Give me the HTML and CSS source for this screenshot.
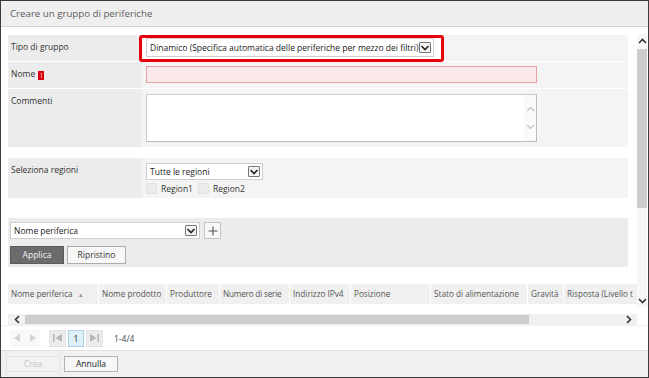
FILE: index.html
```html
<!DOCTYPE html>
<html lang="it">

<head>
    <meta charset="UTF-8">
    <title>Creare un gruppo di periferiche</title>
    <link rel="stylesheet" href="styles.css">
</head>

<body>
    <div class="dialog">
        <div class="dialog-title">Creare un gruppo di periferiche</div>

        <div class="scroll-area">
            <div class="content">
                <div class="form-table">
                    <div class="form-row row-type">
                        <div class="form-label">Tipo di gruppo</div>
                        <div class="form-value">
                            <div class="highlight">
                                <div class="select select-type">
                                    <span>Dinamico (Specifica automatica delle periferiche per mezzo dei filtri)</span>
                                    <span class="select-arrow"><svg width="10" height="8" viewBox="0 0 10 8"><polyline points="1.5,2 5,5.5 8.5,2" fill="none" stroke="#222" stroke-width="1.6"/></svg></span>
                                </div>
                            </div>
                        </div>
                    </div>
                    <div class="form-row row-name">
                        <div class="form-label">Nome <span class="required">!</span></div>
                        <div class="form-value">
                            <div class="input input-error"></div>
                        </div>
                    </div>
                    <div class="form-row row-comment">
                        <div class="form-label">Commenti</div>
                        <div class="form-value">
                            <div class="textarea">
                                <div class="textarea-bar">
                                    <svg width="9" height="6" viewBox="0 0 9 6"><polyline points="1,5 4.5,1.5 8,5" fill="none" stroke="#c4c4c4" stroke-width="1.2"/></svg>
                                    <svg width="9" height="6" viewBox="0 0 9 6"><polyline points="1,1 4.5,4.5 8,1" fill="none" stroke="#c4c4c4" stroke-width="1.2"/></svg>
                                </div>
                            </div>
                        </div>
                    </div>
                </div>

                <div class="form-table regions">
                    <div class="form-row row-regions">
                        <div class="form-label">Seleziona regioni</div>
                        <div class="form-value">
                            <div class="select select-regions">
                                <span>Tutte le regioni</span>
                                <span class="select-arrow"><svg width="10" height="8" viewBox="0 0 10 8"><polyline points="1.5,2 5,5.5 8.5,2" fill="none" stroke="#222" stroke-width="1.6"/></svg></span>
                            </div>
                            <div class="checks">
                                <span class="checkbox"></span><span class="check-label">Region1</span>
                                <span class="checkbox"></span><span class="check-label">Region2</span>
                            </div>
                        </div>
                    </div>
                </div>

                <div class="filter-box">
                    <div class="filter-line">
                        <div class="select select-filter">
                            <span>Nome periferica</span>
                            <span class="select-arrow"><svg width="10" height="8" viewBox="0 0 10 8"><polyline points="1.5,2 5,5.5 8.5,2" fill="none" stroke="#222" stroke-width="1.6"/></svg></span>
                        </div>
                        <div class="btn-add"><svg width="10" height="10" viewBox="0 0 10 10"><path d="M5 0.5V9.5M0.5 5H9.5" stroke="#555" stroke-width="1.1"/></svg></div>
                    </div>
                    <div class="filter-buttons">
                        <div class="btn btn-dark">Applica</div>
                        <div class="btn btn-light">Ripristino</div>
                    </div>
                </div>

                <div class="grid-header">
                    <div class="col col-1">Nome periferica <span class="sort">&#9650;</span></div>
                    <div class="col col-2">Nome prodotto</div>
                    <div class="col col-3">Produttore</div>
                    <div class="col col-4">Numero di serie</div>
                    <div class="col col-5">Indirizzo IPv4</div>
                    <div class="col col-6">Posizione</div>
                    <div class="col col-7">Stato di alimentazione</div>
                    <div class="col col-8">Gravità</div>
                    <div class="col col-9">Risposta (Livello t</div>
                </div>
            </div>

            <div class="vscroll">
                <div class="vscroll-arrow"><svg width="9" height="6" viewBox="0 0 9 6"><polyline points="1,5 4.5,1.5 8,5" fill="none" stroke="#333" stroke-width="1.6"/></svg></div>
                <div class="vscroll-thumb"></div>
                <div class="vscroll-space"></div>
                <div class="vscroll-arrow"><svg width="9" height="6" viewBox="0 0 9 6"><polyline points="1,1 4.5,4.5 8,1" fill="none" stroke="#333" stroke-width="1.6"/></svg></div>
            </div>
        </div>

        <div class="hscroll">
            <div class="hscroll-track">
                <div class="hscroll-arrow"><svg width="6" height="9" viewBox="0 0 6 9"><polyline points="5,1 1.5,4.5 5,8" fill="none" stroke="#333" stroke-width="1.6"/></svg></div>
                <div class="hscroll-thumb"></div>
                <div class="hscroll-space"></div>
                <div class="hscroll-arrow"><svg width="6" height="9" viewBox="0 0 6 9"><polyline points="1,1 4.5,4.5 1,8" fill="none" stroke="#333" stroke-width="1.6"/></svg></div>
            </div>
        </div>

        <div class="pager">
            <div class="pager-btn pager-plain"><svg width="7" height="8" viewBox="0 0 7 8"><polygon points="6,0 6,8 0,4" fill="#d2d2d2"/></svg></div>
            <div class="pager-btn pager-plain"><svg width="7" height="8" viewBox="0 0 7 8"><polygon points="1,0 1,8 7,4" fill="#d2d2d2"/></svg></div>
            <div class="pager-btn pager-box first-box"><svg width="9" height="8" viewBox="0 0 9 8"><rect x="0" y="0" width="1.5" height="8" fill="#b8b8b8"/><polygon points="9,0 9,8 2.5,4" fill="#b8b8b8"/></svg></div>
            <div class="pager-btn pager-current">1</div>
            <div class="pager-btn pager-box"><svg width="9" height="8" viewBox="0 0 9 8"><polygon points="0,0 0,8 6.5,4" fill="#b8b8b8"/><rect x="7.5" y="0" width="1.5" height="8" fill="#b8b8b8"/></svg></div>
            <div class="pager-info">1-4/4</div>
        </div>

        <div class="dialog-footer">
            <div class="btn btn-footer btn-disabled">Crea</div>
            <div class="btn btn-footer">Annulla</div>
        </div>
    </div>
</body>

</html>
```

FILE: styles.css
```css
body {
    margin: 0;
    padding: 0;
    font-family: "Open Sans", "Noto Sans", sans-serif;
    font-size: 8.5px;
    color: #333;
}

.dialog {
    width: 649px;
    height: 378px;
    box-sizing: border-box;
    border: 1px solid #3c3c3c;
    display: flex;
    flex-direction: column;
    background-color: #fff;
    overflow: hidden;
}

.dialog-title {
    height: 25px;
    line-height: 25px;
    padding-left: 9px;
    background-color: #efefef;
    border-bottom: 1px solid #d4d4d4;
    font-size: 9.7px;
    color: #606060;
}

/* scrolling part */

.scroll-area {
    height: 287px;
    display: flex;
}

.content {
    width: 629px;
    padding: 8px 0 0 7px;
    overflow: hidden;
}

.form-table {
    width: 620px;
}

.form-row {
    display: flex;
    border-bottom: 1px solid #fff;
}

.form-label {
    width: 131px;
    padding: 6px 0 0 3px;
    background-color: #ececec;
}

.form-value {
    flex: 1;
    padding: 4px 0 0 4px;
    background-color: #f4f4f4;
}

.row-type {
    height: 26px;
}

.row-type .form-value {
    padding: 0;
}

.highlight {
    display: inline-block;
    margin-left: -3px;
    padding: 0 7px 1px 4px;
    height: 20px;
    border: 3px solid #e8000b;
    border-radius: 3px;
    background-color: #fff;
}

.row-name {
    height: 26px;
}

.row-comment {
    height: 58px;
    border-bottom: none;
}

.row-comment .form-value {
    padding-top: 5px;
}

.select {
    height: 17px;
    box-sizing: border-box;
    border: 1px solid #cfcfcf;
    background-color: #fff;
    display: flex;
    align-items: center;
    justify-content: space-between;
    padding: 0 2px 0 3px;
    color: #222;
    white-space: nowrap;
}

.select-type {
    width: 288px;
    height: 19px;
    margin-top: 0;
}

.select-arrow {
    width: 10px;
    height: 9px;
    border: 1px solid #777;
    border-radius: 1px;
    background-color: #f4f4f4;
    display: flex;
    align-items: center;
    justify-content: center;
}

.required {
    display: inline-block;
    width: 6px;
    height: 9px;
    line-height: 9px;
    margin-left: 1px;
    vertical-align: -1px;
    background-color: #d9000d;
    color: #fff;
    font-size: 7px;
    text-align: center;
}

.input {
    width: 391px;
    height: 17px;
    box-sizing: border-box;
    border: 1px solid #ccc;
}

.input-error {
    background-color: #fbe8e8;
    border-color: #e1a3a4;
}

.textarea {
    width: 391px;
    height: 48px;
    box-sizing: border-box;
    border: 1px solid #ccc;
    border-right-color: #bdbdbd;
    border-bottom-color: #b9b9b9;
    background-color: #fff;
    display: flex;
    justify-content: flex-end;
}

.textarea-bar {
    width: 12px;
    background-color: #fafafa;
    display: flex;
    flex-direction: column;
    align-items: center;
    padding-top: 11px;
    gap: 12px;
}

.regions {
    margin-top: 11px;
}

.row-regions {
    height: 40px;
    border-bottom: none;
}

.row-regions .form-value {
    padding-top: 5px;
}

.select-regions {
    width: 117px;
}

.checks {
    display: flex;
    align-items: center;
    margin-top: 3px;
}

.checkbox {
    width: 9px;
    height: 9px;
    border: 1px solid #e3e3e3;
    background-color: #ececec;
    margin-right: 4px;
}

.check-label {
    margin-right: 5px;
    color: #333;
}

/* filter */

.filter-box {
    width: 620px;
    height: 49px;
    margin-top: 20px;
    padding: 4px 0 0 2px;
    box-sizing: border-box;
    background-color: #ececec;
}

.filter-line {
    display: flex;
    gap: 4px;
}

.select-filter {
    width: 190px;
}

.btn-add {
    width: 17px;
    height: 17px;
    box-sizing: border-box;
    border: 1px solid #c4c4c4;
    background-color: #f7f7f7;
    display: flex;
    align-items: center;
    justify-content: center;
}

.filter-buttons {
    display: flex;
    gap: 3px;
    margin-top: 7px;
}

.btn {
    height: 18px;
    line-height: 16px;
    box-sizing: border-box;
    text-align: center;
}

.btn-dark {
    width: 54px;
    background-color: #6b6b6b;
    border: 1px solid #5c5c5c;
    color: #f2f2f2;
}

.btn-light {
    width: 59px;
    background-color: #f7f7f7;
    border: 1px solid #adadad;
    color: #333;
}

/* grid */

.grid-header {
    display: flex;
    height: 20px;
    margin-top: 17px;
    background-color: #f0f0f0;
    white-space: nowrap;
    color: #555;
    font-size: 8.2px;
}

.col {
    padding-left: 3px;
    line-height: 20px;
    border-right: 1px solid #fff;
    overflow: hidden;
    flex-shrink: 0;
    box-sizing: border-box;
}

.col-1 { width: 91px; }
.col-2 { width: 68px; }
.col-3 { width: 53px; }
.col-4 { width: 70px; letter-spacing: -0.2px; }
.col-5 { width: 61px; }
.col-6 { width: 80px; }
.col-7 { width: 97px; }
.col-8 { width: 36px; }
.col-9 { width: 80px; border-right: none; }

.sort {
    font-size: 6px;
    color: #999;
    margin-left: 3px;
}

.vscroll {
    width: 10px;
    margin-top: 7px;
    height: 273px;
    display: flex;
    flex-direction: column;
    background-color: #f7f7f7;
}

.vscroll-arrow {
    height: 13px;
    display: flex;
    align-items: center;
    justify-content: center;
}

.vscroll-thumb {
    height: 159px;
    margin-top: 2px;
    background-color: #cdcdcd;
}

.vscroll-space {
    flex: 1;
}

.hscroll {
    height: 11px;
    padding-left: 7px;
}

.hscroll-track {
    width: 629px;
    height: 11px;
    display: flex;
    align-items: center;
    background-color: #f0f0f0;
}

.hscroll-arrow {
    width: 17px;
    display: flex;
    justify-content: center;
}

.hscroll-thumb {
    width: 504px;
    height: 9px;
    background-color: #cdcdcd;
}

.hscroll-space {
    flex: 1;
}

/* pager */

.pager {
    height: 25px;
    display: flex;
    align-items: center;
    padding-left: 9px;
    border-top: 1px solid #f0f0f0;
    box-sizing: border-box;
}

.pager-btn {
    width: 15px;
    height: 17px;
    box-sizing: border-box;
    display: flex;
    align-items: center;
    justify-content: center;
    margin-right: 2px;
}

.pager-plain {
    background-color: #f8f8f8;
    margin-right: 0;
}

.pager-box {
    width: 17px;
    background-color: #ececec;
    border: 1px solid #e2e2e2;
}

.first-box {
    margin-left: 9px;
}

.pager-current {
    width: 16px;
    background-color: #dff0f8;
    border: 1px solid #a9d0e3;
    color: #222;
}

.pager-info {
    margin-left: 9px;
    color: #444;
}

/* footer */

.dialog-footer {
    flex: 1;
    display: flex;
    align-items: center;
    gap: 4px;
    padding-left: 5px;
    background-color: #f0f0f0;
    border-top: 1px solid #e0e0e0;
}

.btn-footer {
    width: 54px;
    height: 16px;
    line-height: 14px;
    background-color: #f7f7f7;
    border: 1px solid #b3b3b3;
    color: #222;
}

.btn-disabled {
    border-color: #e4e4e4;
    color: #c4c4c4;
    background-color: #f2f2f2;
}
```
